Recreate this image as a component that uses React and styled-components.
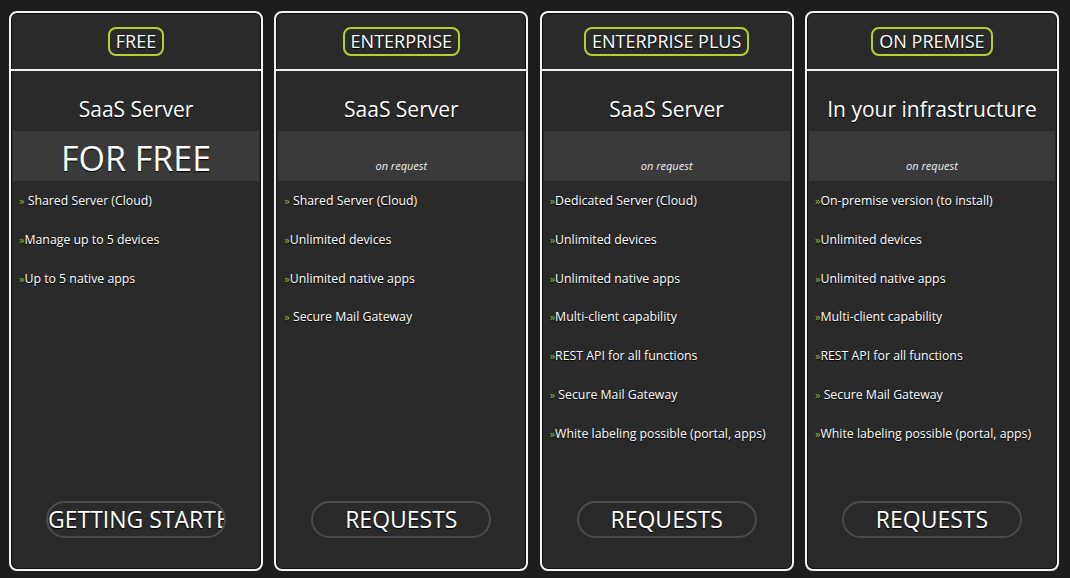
import styled, { createGlobalStyle } from "styled-components"

const Global = createGlobalStyle`
  html, body {
    margin: 0;
    padding: 0;
    background: #1d1d1d;
    font-family: "Open Sans", "Noto Sans", sans-serif;
    color: #fff;
  }
  * {
    box-sizing: border-box;
  }
`

const Page = styled.div`
  display: flex;
  gap: 11.33px;
  padding: 11px 9px 7px 9px;
  width: 1070px;
  height: 578px;
`

const Card = styled.div`
  width: 254px;
  height: 560px;
  display: flex;
  flex-direction: column;
  background: #2a2a2a;
  border: 2px solid #f4f4f4;
  border-radius: 8px;
  box-shadow: inset 0 0 0 1px #111;
  overflow: hidden;
`

const Header = styled.div`
  height: 58px;
  display: flex;
  align-items: center;
  justify-content: center;
  border-bottom: 2px solid #f4f4f4;
  padding-top: 1px;
`

const Badge = styled.span`
  display: inline-block;
  font-size: 18px;
  line-height: 25px;
  padding: 0 6px;
  border: 2px solid #b3d12c;
  border-radius: 8px;
  text-shadow: 0 1px 1px #000;
`

const Title = styled.div`
  height: 60px;
  display: flex;
  align-items: center;
  justify-content: center;
  font-size: 21px;
  padding-top: 16px;
  text-shadow: 0 1px 1px #000;
`

const Band = styled.div`
  margin: 0 2px;
  height: 50px;
  background: #3a3a3a;
  display: flex;
  justify-content: center;
  align-items: ${(p) => (p.$big ? "center" : "flex-end")};
  padding-top: ${(p) => (p.$big ? "3px" : "0")};
  padding-bottom: ${(p) => (p.$big ? "0" : "8px")};
`

const BigPrice = styled.span`
  font-size: 34px;
  line-height: 40px;
  text-shadow: 0 1px 1px #000;
`

const Note = styled.span`
  font-size: 11px;
  font-style: italic;
  color: #eee;
  line-height: 14px;
`

const Features = styled.ul`
  list-style: none;
  margin: 0;
  padding: 11px 0 0 8px;
  flex: 1;
`

const Feature = styled.li`
  font-size: 12.3px;
  line-height: 18px;
  height: 38.8px;
  white-space: nowrap;
  text-shadow: 0 1px 1px #000;
`

const Arrow = styled.span`
  color: #9cc13a;
  font-size: 11px;
`

const Footer = styled.div`
  display: flex;
  justify-content: center;
  padding: 0 0 31px 0;
`

const Button = styled.div`
  width: 180px;
  height: 37px;
  border: 2px solid #4c4c4c;
  border-radius: 19px;
  font-size: 23px;
  line-height: 33px;
  text-align: center;
  white-space: nowrap;
  overflow: hidden;
  text-shadow: 0 1px 1px #000;
`

const plans = [
  {
    badge: "FREE",
    title: "SaaS Server",
    big: "FOR FREE",
    button: "GETTING STARTED",
    features: [" Shared Server (Cloud)", "Manage up to 5 devices", "Up to 5 native apps"],
  },
  {
    badge: "ENTERPRISE",
    title: "SaaS Server",
    button: "REQUESTS",
    features: [" Shared Server (Cloud)", "Unlimited devices", "Unlimited native apps", " Secure Mail Gateway"],
  },
  {
    badge: "ENTERPRISE PLUS",
    title: "SaaS Server",
    button: "REQUESTS",
    features: [
      "Dedicated Server (Cloud)",
      "Unlimited devices",
      "Unlimited native apps",
      "Multi-client capability",
      "REST API for all functions",
      " Secure Mail Gateway",
      "White labeling possible (portal, apps)",
    ],
  },
  {
    badge: "ON PREMISE",
    title: "In your infrastructure",
    button: "REQUESTS",
    features: [
      "On-premise version (to install)",
      "Unlimited devices",
      "Unlimited native apps",
      "Multi-client capability",
      "REST API for all functions",
      " Secure Mail Gateway",
      "White labeling possible (portal, apps)",
    ],
  },
]

export default function App() {
  return (
    <>
      <Global />
      <Page>
        {plans.map((p) => (
          <Card key={p.badge}>
            <Header>
              <Badge>{p.badge}</Badge>
            </Header>
            <Title>{p.title}</Title>
            <Band $big={!!p.big}>
              {p.big ? <BigPrice>{p.big}</BigPrice> : <Note>on request</Note>}
            </Band>
            <Features>
              {p.features.map((f) => (
                <Feature key={f}>
                  <Arrow>»</Arrow>
                  {f}
                </Feature>
              ))}
            </Features>
            <Footer>
              <Button>{p.button}</Button>
            </Footer>
          </Card>
        ))}
      </Page>
    </>
  )
}
